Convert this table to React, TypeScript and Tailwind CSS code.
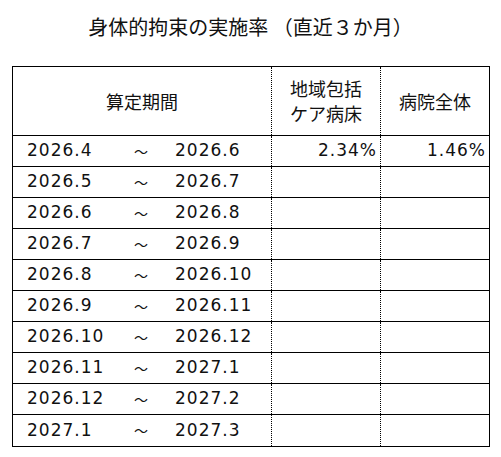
const rows: [string, string, string, string][] = [
  ["2026.4", "2026.6", "2.34%", "1.46%"],
  ["2026.5", "2026.7", "", ""],
  ["2026.6", "2026.8", "", ""],
  ["2026.7", "2026.9", "", ""],
  ["2026.8", "2026.10", "", ""],
  ["2026.9", "2026.11", "", ""],
  ["2026.10", "2026.12", "", ""],
  ["2026.11", "2027.1", "", ""],
  ["2026.12", "2027.2", "", ""],
  ["2027.1", "2027.3", "", ""],
];

export default function App() {
  return (
    <div className="w-[501px] h-[457px] bg-white text-[#111] font-['DejaVu_Sans','Noto_Sans_CJK_JP',sans-serif]">
      {/* Title */}
      <div className="h-[66px] pt-[13px] text-center text-[20px] leading-[28px] font-['Noto_Sans_CJK_JP',sans-serif]">
        身体的拘束の実施率 （直近３か月）
      </div>

      {/* Table */}
      <div className="ml-[12px] w-[478px] border border-black">
        <div className="grid grid-cols-[259px_109px_108px] h-[69px] border-b border-black text-[18px] font-['Noto_Sans_CJK_JP',sans-serif]">
          <div className="flex items-center justify-center border-r border-dotted border-black">
            算定期間
          </div>
          <div className="flex flex-col items-center justify-center leading-[25px] border-r border-dotted border-black">
            <span>地域包括</span>
            <span>ケア病床</span>
          </div>
          <div className="flex items-center justify-center">病院全体</div>
        </div>

        {rows.map(([from, to, a, b], i) => (
          <div
            key={from}
            className={`grid grid-cols-[259px_109px_108px] h-[31px] text-[17px] tracking-[1px] ${
              i < rows.length - 1 ? "border-b border-black" : ""
            }`}
          >
            <div className="flex items-center pl-[14px] border-r border-dotted border-black">
              <span className="w-[106px]">{from}</span>
              <span className="w-[42px] pl-[1px] text-[14px] tracking-normal font-['Noto_Sans_CJK_JP',sans-serif]">～</span>
              <span>{to}</span>
            </div>
            <div className="flex items-center justify-end pr-[3px] border-r border-dotted border-black">
              {a}
            </div>
            <div className="flex items-center justify-end pr-[3px]">{b}</div>
          </div>
        ))}
      </div>
    </div>
  );
}
